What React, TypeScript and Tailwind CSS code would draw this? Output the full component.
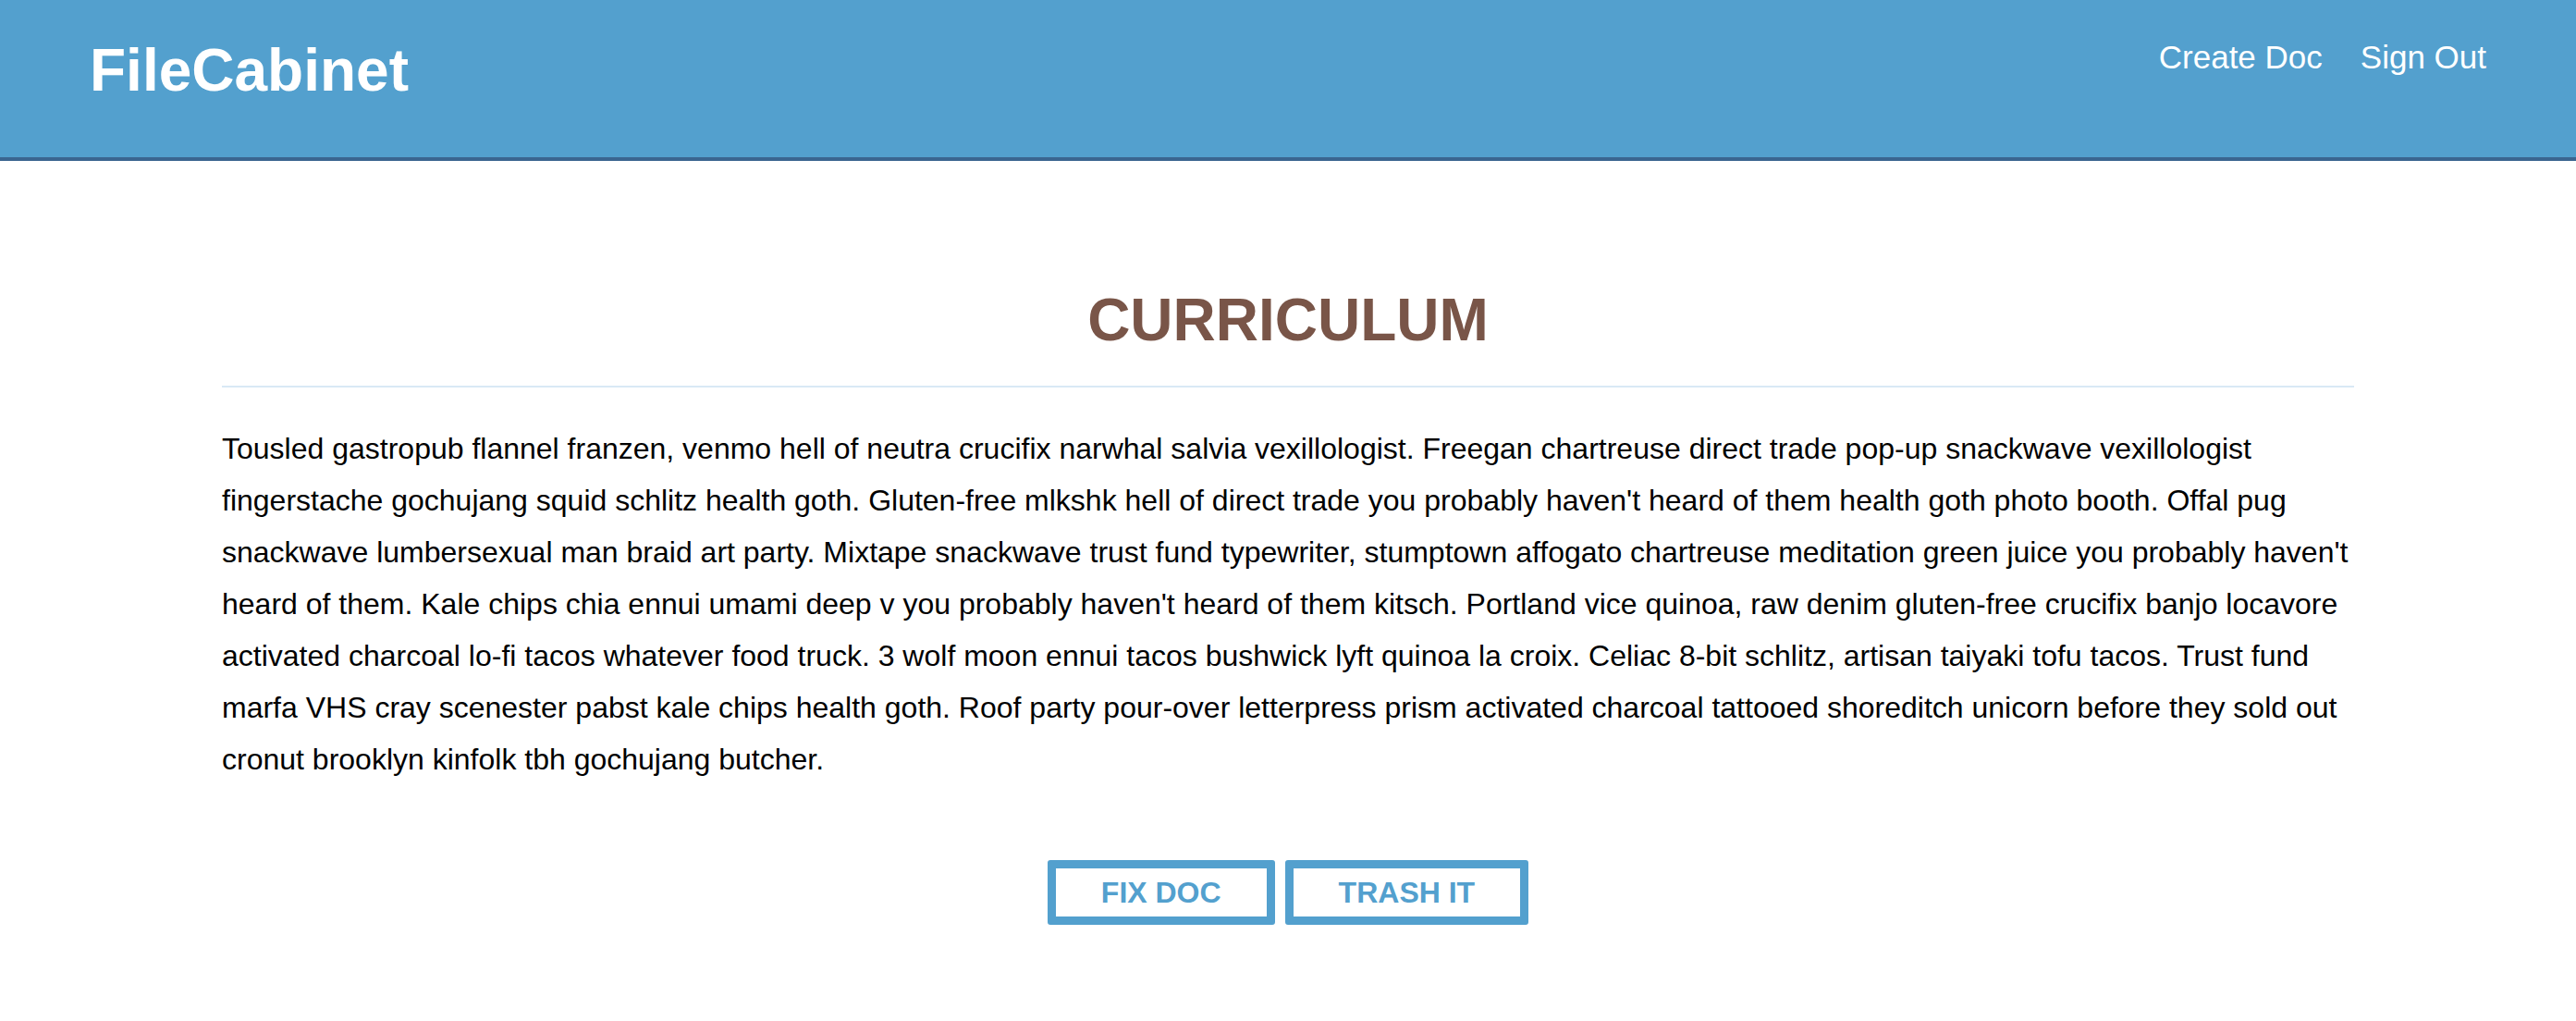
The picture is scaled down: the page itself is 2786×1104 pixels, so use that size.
import React from "react";

export default function App() {
  return (
    <div className="min-h-screen bg-white font-['Liberation_Sans',Arial,Helvetica,sans-serif]">
      <header className="h-[174px] bg-[#53a0ce] border-b-4 border-[#3a6590] flex items-start justify-between px-[97px]">
        <a href="#" className="mt-[44px] text-[64px] leading-none font-bold text-white">
          FileCabinet
        </a>
        <nav className="mt-[44px] flex gap-[41px] text-[35px] leading-none text-white">
          <a href="#">Create Doc</a>
          <a href="#">Sign Out</a>
        </nav>
      </header>
      <main className="w-[2306px] mx-auto">
        <h1 className="mt-[140px] text-center text-[64px] leading-none font-bold text-[#795548]">
          CURRICULUM
        </h1>
        <div className="mt-[39px] h-[2px] bg-[#d9e9f5]" />
        <p className="mt-[38px] text-[32px] leading-[56px] text-black">
          Tousled gastropub flannel franzen, venmo hell of neutra crucifix narwhal salvia vexillologist. Freegan chartreuse direct trade pop-up snackwave vexillologist fingerstache gochujang squid schlitz health goth. Gluten-free mlkshk hell of direct trade you probably haven't heard of them health goth photo booth. Offal pug snackwave lumbersexual man braid art party. Mixtape snackwave trust fund typewriter, stumptown affogato chartreuse meditation green juice you probably haven't heard of them. Kale chips chia ennui umami deep v you probably haven't heard of them kitsch. Portland vice quinoa, raw denim gluten-free crucifix banjo locavore activated charcoal lo-fi tacos whatever food truck. 3 wolf moon ennui tacos bushwick lyft quinoa la croix. Celiac 8-bit schlitz, artisan taiyaki tofu tacos. Trust fund marfa VHS cray scenester pabst kale chips health goth. Roof party pour-over letterpress prism activated charcoal tattooed shoreditch unicorn before they sold out cronut brooklyn kinfolk tbh gochujang butcher.
        </p>
        <div className="mt-[81px] flex justify-center gap-[11px]">
          <button className="h-[70px] px-[49px] border-[9px] border-[#53a0ce] rounded-[3px] text-[32px] leading-none font-bold text-[#53a0ce] bg-white">
            FIX DOC
          </button>
          <button className="h-[70px] px-[49px] border-[9px] border-[#53a0ce] rounded-[3px] text-[32px] leading-none font-bold text-[#53a0ce] bg-white">
            TRASH IT
          </button>
        </div>
      </main>
    </div>
  );
}
